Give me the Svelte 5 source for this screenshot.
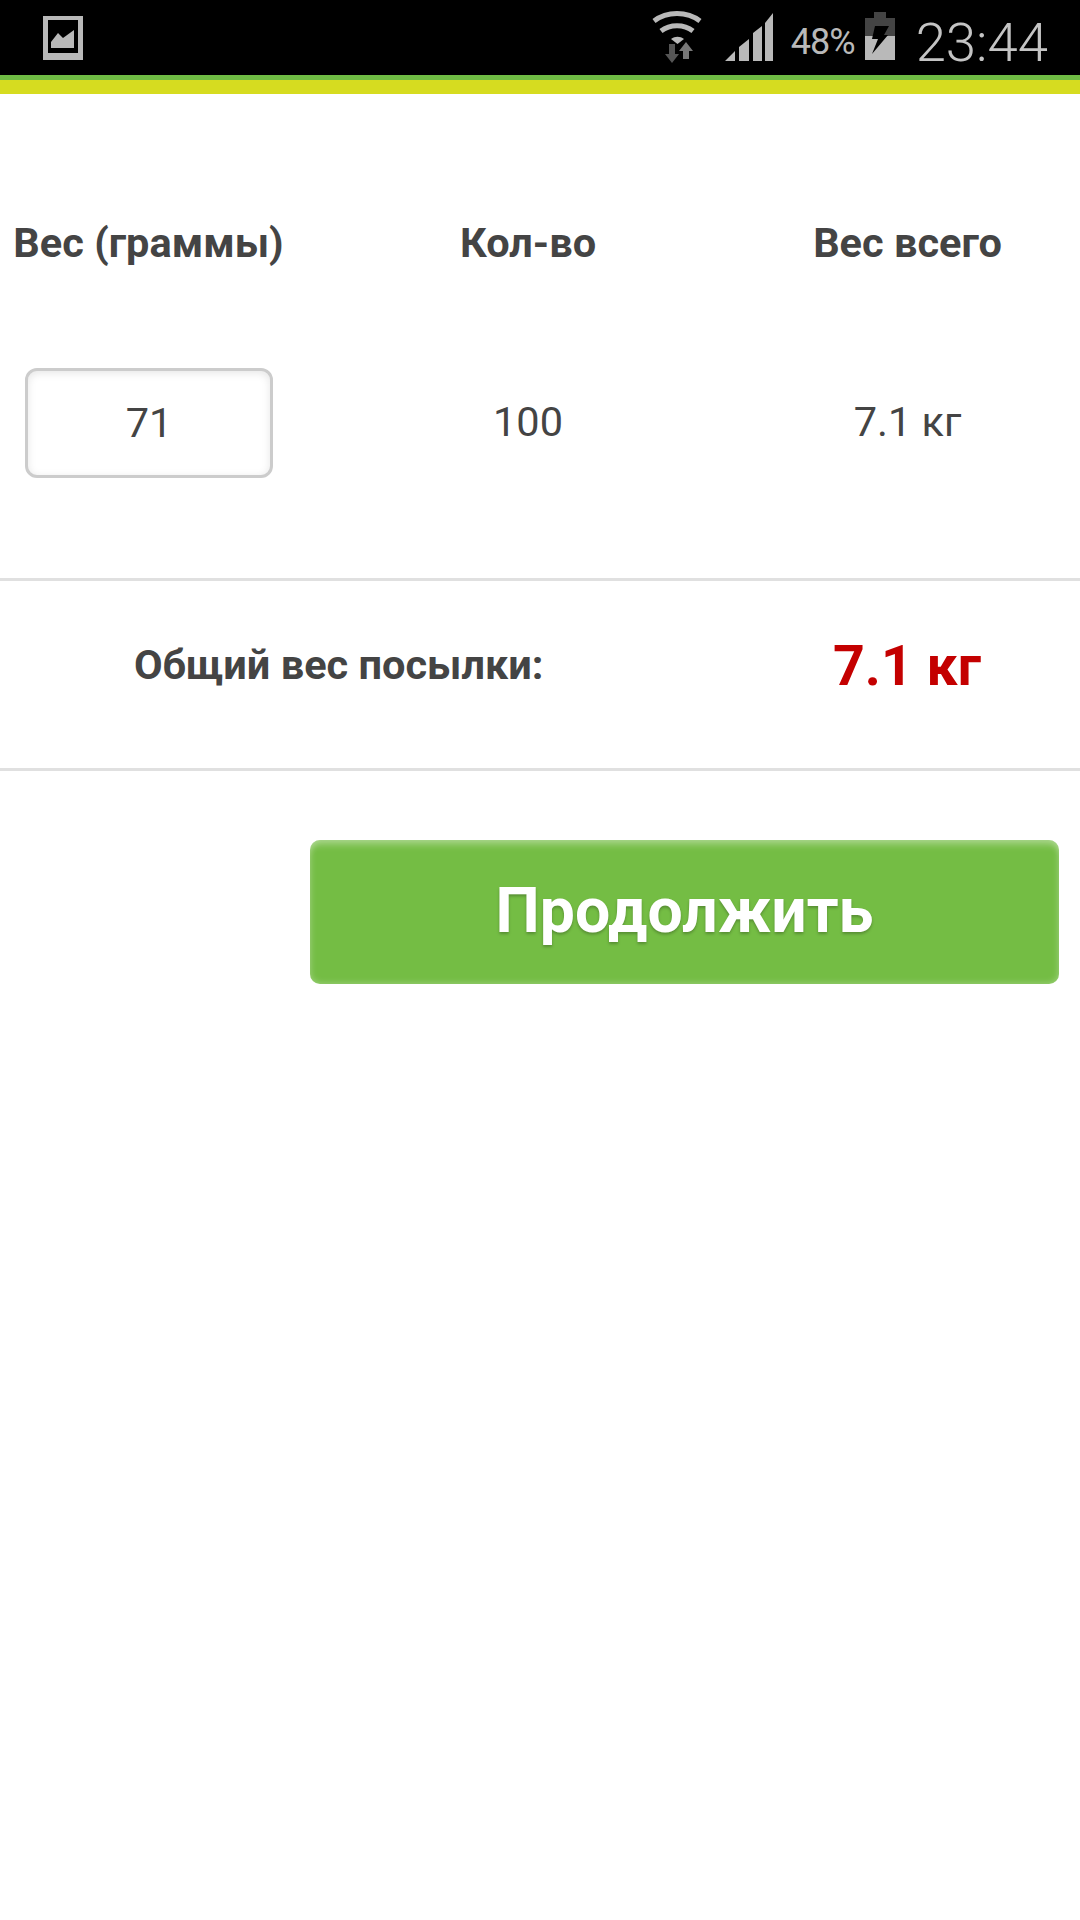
<script>
	let weight = $state(71);
	let qty = 100;
	let total = $derived((weight * qty) / 1000);
</script>

<div class="screen">
	<header class="status">
		<svg class="notif" width="40" height="44" viewBox="0 0 40 44">
			<path fill="#b9b9b9" fill-rule="evenodd" d="M0 0H40V44H0ZM5 4V37H35V4Z"/>
			<path fill="#b9b9b9" d="M8 32V26L15 17L20 22L31 14V32Z"/>
		</svg>
		<div class="status-right">
			<svg class="wifi" width="54" height="56" viewBox="0 0 54 56">
				<g fill="none" stroke="#b9b9b9" stroke-width="5">
					<path d="M2 11C15 1 35 1 48 11"/>
					<path d="M9 21C18 14 32 14 41 21"/>
				</g>
				<path fill="#b9b9b9" d="M19 29C23 26 28 26 32 29L25.500 34Z"/>
				<path fill="#555" d="M17 34H23V44H27L20 53L13 44H17Z"/>
				<path fill="#777" d="M34 32L41 41H37V49H31V41H27Z"/>
			</svg>
			<svg class="signal" width="48" height="50" viewBox="0 0 48 50">
				<path fill="#b9b9b9" d="M0 48L10 38V48ZM14 34L24 26V48H14ZM28 20L37 13V48H28ZM40 10L48 0V48H40Z"/>
			</svg>
			<span class="pct">48%</span>
			<svg class="battery" width="30" height="48" viewBox="0 0 30 48">
				<path fill="#444" d="M9 0H21V6H30V24H0V6H9Z"/>
				<rect fill="#b9b9b9" y="24" width="30" height="24"/>
				<path fill="#000" d="M10 14H24L19 23H23L7 42L13 27H7Z"/>
			</svg>
			<span class="time">23:44</span>
		</div>
	</header>
	<div class="stripe"></div>

	<main>
		<section class="grid heads">
			<div>Вес (граммы)</div>
			<div>Кол-во</div>
			<div>Вес всего</div>
		</section>

		<section class="grid row">
			<div><input class="weight" type="text" bind:value={weight} /></div>
			<div>{qty}</div>
			<div>{total} кг</div>
		</section>

		<section class="summary">
			<div class="summary-label">Общий вес посылки:</div>
			<div class="summary-value">{total} кг</div>
		</section>

		<div class="actions">
			<button class="next">Продолжить</button>
		</div>
	</main>
</div>

<style>
	:global(body) {
		background: #fff;
	}

	.screen {
		width: 1080px;
		height: 1920px;
		font-family: Roboto, sans-serif;
		color: #444;
		overflow: hidden;
	}

	.status {
		height: 75px;
		background: #000;
		display: flex;
		align-items: flex-start;
		justify-content: space-between;
		box-sizing: border-box;
		padding: 16px 32px 0 43px;
	}

	.status-right {
		display: flex;
		align-items: flex-start;
		margin-top: -6px;
	}

	.signal {
		margin: 3px 0 0 19px;
	}

	.pct {
		margin: 11px 0 0 18px;
		font-size: 36px;
		line-height: 42px;
		color: #b9b9b9;
		letter-spacing: -1px;
	}

	.battery {
		margin: 2px 0 0 10px;
	}

	.time {
		margin: 0 0 0 21px;
		font-size: 54.5px;
		line-height: 64px;
		color: #c4c4c4;
		font-weight: 300;
	}

	.stripe {
		height: 14px;
		background: #d6dc20;
		border-top: 5px solid #6fbb44;
	}

	.grid {
		display: grid;
		grid-template-columns: 297px 462px 297px;
		text-align: center;
	}

	.heads {
		margin-top: 125px;
		height: 48px;
		line-height: 48px;
		font-size: 41.5px;
		font-weight: 700;
	}

	.row {
		margin-top: 101px;
		height: 210px;
		font-size: 41.5px;
		line-height: 108px;
		border-bottom: 3px solid #e0e0e0;
	}

	.weight {
		display: block;
		box-sizing: border-box;
		width: 248px;
		height: 110px;
		margin: 0 0 0 25px;
		padding: 0 0 2px;
		border: 3px solid #cccccc;
		border-radius: 12px;
		box-shadow: inset 0 2px 8px rgba(0, 0, 0, 0.1);
		background: #fff;
		font: 41.5px Roboto, sans-serif;
		color: #444;
		text-align: center;
		outline: none;
	}

	.summary {
		display: grid;
		grid-template-columns: 758px 298px;
		align-items: center;
		box-sizing: border-box;
		height: 190px;
		padding-bottom: 20px;
		border-bottom: 3px solid #e0e0e0;
		font-weight: 700;
	}

	.summary-label {
		font-size: 41.5px;
		text-align: left;
		padding-left: 134px;
	}

	.summary-value {
		font-size: 55.5px;
		color: #c40000;
		text-align: center;
		padding-top: 4px;
	}

	.actions {
		display: flex;
		justify-content: flex-end;
		padding: 69px 21px 0 0;
	}

	.next {
		width: 749px;
		height: 144px;
		padding: 0 0 4px;
		border: 0;
		border-radius: 10px;
		background: #74bd44;
		box-shadow: inset 0 10px 6px -4px rgba(255, 255, 255, 0.22), inset 0 0 7px rgba(255, 255, 255, 0.35);
		color: #fff;
		font: 700 62.5px Roboto, sans-serif;
		text-shadow: 0 2px 3px rgba(0, 0, 0, 0.25);
	}
</style>
